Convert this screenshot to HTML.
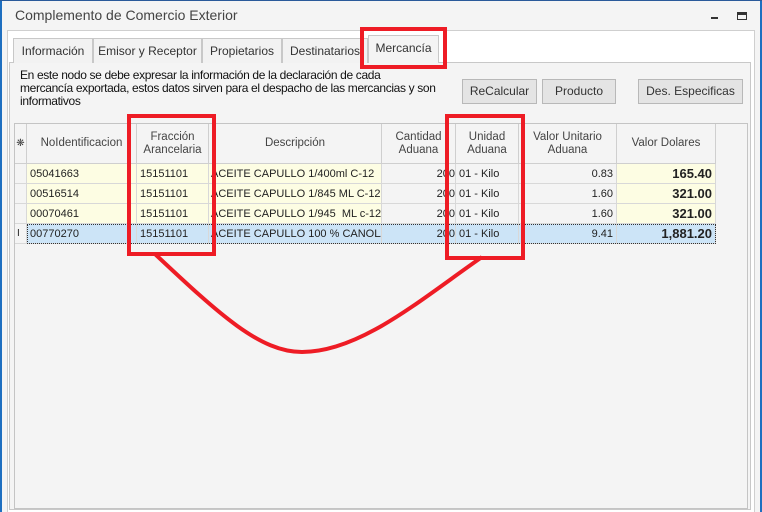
<!DOCTYPE html>
<html><head><meta charset="utf-8"><style>
*{margin:0;padding:0;box-sizing:border-box}
body{width:762px;height:512px;overflow:hidden;background:#f4f4f4;font-family:"Liberation Sans","DejaVu Sans",sans-serif;position:relative;color:#222}
.a{position:absolute}
.tab{position:absolute;top:38px;height:25px;border:1px solid #c8c8c8;border-bottom:none;background:#f2f2f2;font-size:12px;color:#333;text-align:center;line-height:24px}
.btn{position:absolute;top:79px;height:25px;border:1px solid #b8b8b8;background:#e4e4e4;font-size:12px;color:#333;text-align:center;line-height:23px}
.c{position:absolute;font-size:11px;white-space:nowrap;overflow:hidden;border-right:1px solid #d8d8d8;border-bottom:1px solid #d8d8d8;line-height:20px;padding:0 3px}
.h{position:absolute;font-size:11.5px;color:#444;text-align:center;border-right:1px solid #cfcfcf;border-bottom:1px solid #cfcfcf;display:flex;align-items:center;justify-content:center;line-height:13px;background:#f4f4f4}
.r{position:absolute;border:4px solid #ee1c25}
</style></head><body>
<div class="a" style="left:0;top:0;width:2px;height:512px;background:#1e6fc0"></div>
<div class="a" style="right:0;top:0;width:2px;height:512px;background:#1e6fc0"></div>
<div class="a" style="left:0;top:0;width:762px;height:1px;background:#2a5a9a"></div>
<div class="a" style="left:15px;top:7px;font-size:14px;color:#444">Complemento de Comercio Exterior</div>
<div class="a" style="left:711px;top:17px;width:7px;height:2px;background:#333"></div>
<div class="a" style="left:737px;top:12px;width:10px;height:8px;border:1px solid #333;border-top:3px solid #333"></div>
<div class="a" style="left:7px;top:30px;width:748px;height:482px;border:1px solid #cfcfcf;border-bottom:none;background:#fff"></div>
<div class="a" style="left:9px;top:62px;width:742px;height:448px;border:1px solid #c8c8c8;background:#f4f4f4"></div>
<div class="tab" style="left:13px;width:80px">Información</div>
<div class="tab" style="left:93px;width:109px">Emisor y Receptor</div>
<div class="tab" style="left:202px;width:80px">Propietarios</div>
<div class="tab" style="left:282px;width:86px">Destinatarios</div>
<div class="tab" style="left:368px;top:35px;height:28px;width:71px;background:#f4f4f4">Mercancía</div>
<div class="a" style="left:20px;top:69px;font-size:12px;line-height:13px;color:#111;white-space:nowrap;letter-spacing:-0.35px">En este nodo se debe expresar la información de la declaración de cada<br>mercancía exportada, estos datos sirven para el despacho de las mercancias y son<br>informativos</div>
<div class="btn" style="left:462px;width:75px">ReCalcular</div>
<div class="btn" style="left:542px;width:74px">Producto</div>
<div class="btn" style="left:638px;width:105px">Des. Especificas</div>
<div class="a" style="left:14px;top:123px;width:734px;height:386px;border:1px solid #c4c4c4;background:#f4f4f4"></div>
<div class="h" style="left:15px;top:124px;width:12px;height:40px;font-size:10px">❋</div>
<div class="h" style="left:27px;top:124px;width:110px;height:40px">NoIdentificacion</div>
<div class="h" style="left:137px;top:124px;width:72px;height:40px">Fracción<br>Arancelaria</div>
<div class="h" style="left:209px;top:124px;width:173px;height:40px">Descripción</div>
<div class="h" style="left:382px;top:124px;width:74px;height:40px">Cantidad<br>Aduana</div>
<div class="h" style="left:456px;top:124px;width:63px;height:40px">Unidad<br>Aduana</div>
<div class="h" style="left:519px;top:124px;width:98px;height:40px">Valor Unitario<br>Aduana</div>
<div class="h" style="left:617px;top:124px;width:99px;height:40px">Valor Dolares</div>
<div id="rows"></div>
<script>
var d=[["05041663","ACEITE CAPULLO 1/400ml C-12","0.83","165.40"],["00516514","ACEITE CAPULLO 1/845 ML C-12","1.60","321.00"],["00070461","ACEITE CAPULLO 1/945&nbsp; ML c-12","1.60","321.00"],["00770270","ACEITE CAPULLO 100 % CANOLA","9.41","1,881.20"]];
var h="";
d.forEach(function(r,i){var y=164+i*20,sel=i==3,bg=sel?"#cce4f7":"#fdfde3",bg2=sel?"#cce4f7":"#f4f4f4";
h+='<div class="c" style="left:15px;top:'+y+'px;width:12px;height:20px;background:#f4f4f4;font-size:10px;padding:0 2px">'+(sel?'I':'')+'</div>';
h+='<div class="c" style="left:27px;top:'+y+'px;width:110px;height:20px;background:'+bg+'">'+r[0]+'</div>';
h+='<div class="c" style="left:137px;top:'+y+'px;width:72px;height:20px;background:'+bg+'">15151101</div>';
h+='<div class="c" style="left:209px;top:'+y+'px;width:173px;height:20px;background:'+bg+';padding-left:2px">'+r[1]+'</div>';
h+='<div class="c" style="left:382px;top:'+y+'px;width:74px;height:20px;background:'+bg2+';text-align:right;padding-right:0">200</div>';
h+='<div class="c" style="left:456px;top:'+y+'px;width:63px;height:20px;background:'+bg2+'">01 - Kilo</div>';
h+='<div class="c" style="left:519px;top:'+y+'px;width:98px;height:20px;background:'+bg2+';text-align:right">'+r[2]+'</div>';
h+='<div class="c" style="left:617px;top:'+y+'px;width:99px;height:20px;background:'+(sel?bg:"#fdfde3")+';text-align:right;font-weight:bold;font-size:13px">'+r[3]+'</div>';});
document.getElementById("rows").innerHTML=h;
</script>
<div class="a" style="left:27px;top:224px;width:689px;height:20px;border:1px dotted #333"></div>
<div class="r" style="left:360px;top:27px;width:87px;height:42px"></div>
<div class="r" style="left:127px;top:114px;width:89px;height:142px"></div>
<div class="r" style="left:445px;top:114px;width:80px;height:146px"></div>
<svg class="a" style="left:0;top:0" width="762" height="512"><path d="M155,254 C220,315 260,352 302,352 C360,352 420,300 482,257" fill="none" stroke="#ee1c25" stroke-width="4"/></svg>
</body></html>
